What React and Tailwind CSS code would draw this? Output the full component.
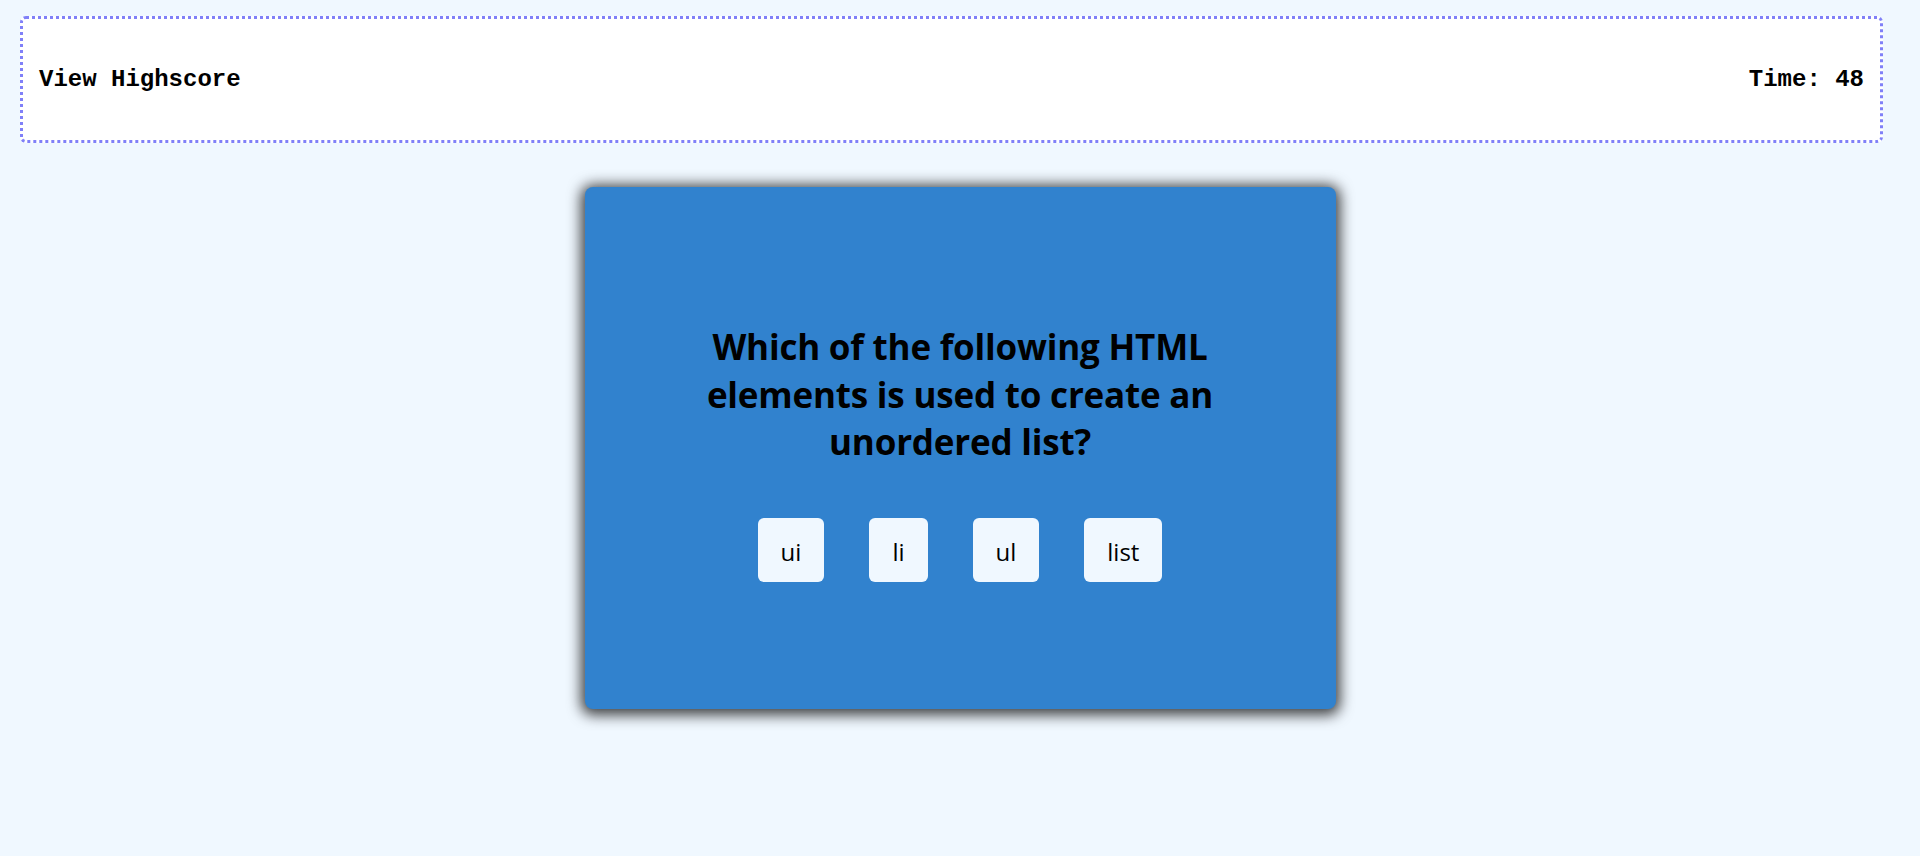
export default function App() {
  const answers = ["ui", "li", "ul", "list"];
  return (
    <div className="min-h-[856px] w-full bg-[#f0f8ff] pt-[16px]">
      <header
        className="ml-[20px] flex h-[127px] w-[1863px] items-center justify-between rounded-md border-[3px] border-dotted border-[#8080f8] bg-white px-[16px] text-[24px] font-bold text-black"
        style={{ fontFamily: '"Liberation Mono", "Courier New", monospace' }}
      >
        <span>View Highscore</span>
        <span>Time: 48</span>
      </header>
      <div className="mt-[44px] flex justify-center">
        <div
          className="flex h-[522px] w-[751px] flex-col items-center justify-center rounded-lg bg-[#3182ce] pt-[9px] shadow-[0_2px_14px_4px_rgba(0,0,0,0.75)]"
          style={{ fontFamily: '"Open Sans", "Noto Sans", sans-serif' }}
        >
          <h1 className="max-w-[530px] text-center text-[35px] font-bold leading-[47.5px] tracking-[-0.2px] text-black">
            Which of the following HTML elements is used to create an unordered list?
          </h1>
          <div className="mt-[52px] flex gap-[45px]">
            {answers.map((a) => (
              <button
                key={a}
                className="h-[64px] rounded-md bg-[#f0f8ff] px-[23px] pt-[4px] text-[24px] leading-[32px] text-black"
              >
                {a}
              </button>
            ))}
          </div>
        </div>
      </div>
    </div>
  );
}
